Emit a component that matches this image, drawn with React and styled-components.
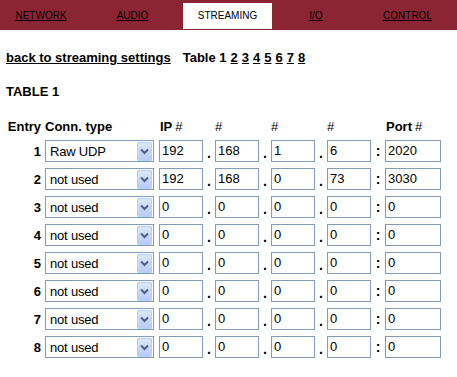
import React from 'react';
import styled, { createGlobalStyle } from 'styled-components';

const GlobalStyle = createGlobalStyle`
    body {
        margin: 0;
        background: #ffffff;
        font-family: "Liberation Sans", Arial, sans-serif;
        color: #000;
    }
`;

const NavBar = styled.nav`
    display: grid;
    grid-template-columns: 82px 101px 89px 88px 95px;
    height: 30px;
    background-color: #8c2533;
    box-sizing: border-box;
    padding: 3px 0 1px;
`;

const NavItem = styled.a`
    display: flex;
    align-items: center;
    justify-content: center;
    font-size: 10px;
    color: #000;
    text-decoration: ${p => (p.$active ? 'none' : 'underline')};
    background: ${p => (p.$active ? '#ffffff' : 'transparent')};
    padding-bottom: 1px;
`;

const Content = styled.main`
    padding: 20px 6px 0;
`;

const LinkLine = styled.div`
    display: flex;
    align-items: baseline;
    font-size: 13px;
    font-weight: bold;
    line-height: 15px;
`;

const Link = styled.a`
    color: #000;
    text-decoration: underline;
`;

const Pager = styled.span`
    margin-left: 12px;
    display: flex;
    gap: 4px;
`;

const Title = styled.h3`
    margin: 19px 0 0;
    font-size: 13px;
    line-height: 15px;
    font-weight: bold;
`;

const Grid = styled.div`
    display: grid;
    grid-template-columns: 39px 114px 44px 12px 44px 12px 44px 12px 44px 14px 56px;
    margin-top: ${p => p.$top || 0}px;
    font-size: 13px;
`;

const HeadCell = styled.div`
    font-weight: bold;
    line-height: 15px;
    text-align: ${p => p.$right ? 'right' : 'left'};
    padding-right: ${p => p.$right ? 4 : 0}px;
    padding-left: ${p => p.$pad || 0}px;
    white-space: nowrap;
`;

const Hash = styled.span`
    font-weight: normal;
    margin-left: ${p => p.$gap || 0}px;
`;

const EntryNum = styled.div`
    font-weight: bold;
    text-align: right;
    padding-right: 4px;
    align-self: center;
`;

const Select = styled.div`
    display: flex;
    align-items: center;
    width: 109px;
    height: 22px;
    box-sizing: border-box;
    border: 1px solid #7f9db9;
    background: #fff;
    padding: 0 1px 0 4px;
`;

const SelectText = styled.span`
    flex: 1;
    font-size: 13px;
    letter-spacing: -0.2px;
`;

const DropButton = styled.span`
    display: flex;
    align-items: center;
    justify-content: center;
    width: 15px;
    height: 19px;
    box-sizing: border-box;
    border: 1px solid #bccdf5;
    border-radius: 1px;
    background: linear-gradient(#dce6fd, #b7cbf6);
`;

const Field = styled.div`
    width: ${p => p.$width || 44}px;
    height: 22px;
    box-sizing: border-box;
    border: 1px solid #7f9db9;
    padding: 0 2px;
    font-size: 13px;
    line-height: 20px;
    background: #fff;
`;

const Sep = styled.div`
    font-weight: bold;
    font-size: 14px;
    text-align: center;
    align-self: ${p => p.$colon ? 'center' : 'end'};
    line-height: ${p => p.$colon ? '20px' : '18px'};
`;

const Chevron = () => (
    <svg width="9" height="7" viewBox="0 0 9 7">
        <path d="M1 1.5 L4.5 5 L8 1.5" fill="none" stroke="#4d6185" strokeWidth="2" />
    </svg>
);

const rows = [
    { type: 'Raw UDP', ip: ['192', '168', '1', '6'], port: '2020' },
    { type: 'not used', ip: ['192', '168', '0', '73'], port: '3030' },
    { type: 'not used', ip: ['0', '0', '0', '0'], port: '0' },
    { type: 'not used', ip: ['0', '0', '0', '0'], port: '0' },
    { type: 'not used', ip: ['0', '0', '0', '0'], port: '0' },
    { type: 'not used', ip: ['0', '0', '0', '0'], port: '0' },
    { type: 'not used', ip: ['0', '0', '0', '0'], port: '0' },
    { type: 'not used', ip: ['0', '0', '0', '0'], port: '0' },
];

const tabs = ['NETWORK', 'AUDIO', 'STREAMING', 'I/O', 'CONTROL'];

const App = () => (
    <>
        <GlobalStyle />
        <NavBar>
            {tabs.map(t => (
                <NavItem key={t} $active={t === 'STREAMING'}>{t}</NavItem>
            ))}
        </NavBar>
        <Content>
            <LinkLine>
                <Link>back to streaming settings</Link>
                <Pager>
                    <span>Table 1</span>
                    {[2, 3, 4, 5, 6, 7, 8].map(n => <Link key={n}>{n}</Link>)}
                </Pager>
            </LinkLine>
            <Title>TABLE 1</Title>
            <Grid $top={20}>
                <HeadCell $right>Entry</HeadCell>
                <HeadCell>Conn. type</HeadCell>
                <HeadCell $pad={1}>IP<Hash $gap={3}>#</Hash></HeadCell>
                <div />
                <HeadCell><Hash>#</Hash></HeadCell>
                <div />
                <HeadCell><Hash>#</Hash></HeadCell>
                <div />
                <HeadCell><Hash>#</Hash></HeadCell>
                <div />
                <HeadCell $pad={1}>Port<Hash $gap={3}>#</Hash></HeadCell>
            </Grid>
            {rows.map((r, i) => (
                <Grid key={i} $top={6}>
                    <EntryNum>{i + 1}</EntryNum>
                    <Select>
                        <SelectText>{r.type}</SelectText>
                        <DropButton><Chevron /></DropButton>
                    </Select>
                    <Field>{r.ip[0]}</Field>
                    <Sep>.</Sep>
                    <Field>{r.ip[1]}</Field>
                    <Sep>.</Sep>
                    <Field>{r.ip[2]}</Field>
                    <Sep>.</Sep>
                    <Field>{r.ip[3]}</Field>
                    <Sep $colon>:</Sep>
                    <Field $width={56}>{r.port}</Field>
                </Grid>
            ))}
        </Content>
    </>
);

export default App;
